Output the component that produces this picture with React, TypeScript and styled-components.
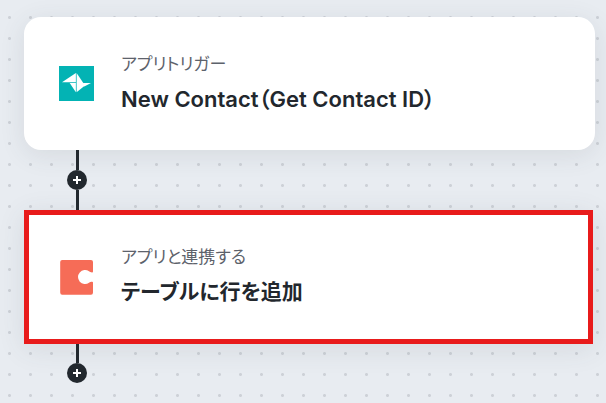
import React from "react";
import styled, { createGlobalStyle } from "styled-components";

const GlobalStyle = createGlobalStyle`
  *, *::before, *::after {
    box-sizing: border-box;
  }
  body {
    margin: 0;
    font-family: Inter, "Noto Sans CJK JP", sans-serif;
    color: #22272d;
  }
`;

const Canvas = styled.main`
  min-height: 100vh;
  padding: 17px 11px 0 24px;
  background-color: #e8ecf1;
  background-image: radial-gradient(circle, #cdd1d7 1px, transparent 2px);
  background-size: 21px 21px;
  background-position: -1px 7px;
`;

const StepCard = styled.article<{ $selected?: boolean }>`
  display: flex;
  align-items: center;
  gap: 26px;
  min-height: ${(p) => (p.$selected ? 134 : 133)}px;
  margin-right: ${(p) => (p.$selected ? 2 : 0)}px;
  padding: 0 ${(p) => (p.$selected ? 29 : 34)}px;
  background: #fff;
  border: ${(p) => (p.$selected ? "5px solid #e81b1b" : "0")};
  border-radius: ${(p) => (p.$selected ? 0 : 17)}px;
  box-shadow: 0 5px 26px rgba(60, 75, 85, 0.11);
`;

const AppIcon = styled.svg`
  display: block;
  flex: none;
  width: 37px;
  height: 37px;
`;

const StepText = styled.div`
  display: flex;
  flex-direction: column;
  gap: 6px;
  min-width: 0;
`;

const StepKind = styled.p`
  margin: 0;
  font-size: 17px;
  line-height: 24px;
  font-weight: 400;
  color: #5d626b;
  font-feature-settings: "palt";
`;

const StepTitle = styled.h2`
  margin: 0;
  font-size: 21px;
  line-height: 34px;
  font-weight: 600;
  font-feature-settings: "palt";

  &:lang(en) {
    font-size: 22px;
  }
`;

const Connector = styled.div<{ $last?: boolean }>`
  display: flex;
  flex-direction: column;
  align-items: center;
  width: 20px;
  margin-left: 43px;
  height: ${(p) => (p.$last ? 39 : 60)}px;
`;

const Line = styled.span`
  flex: 1;
  width: 3px;
  background: #22282e;
`;

const AddButton = styled.button`
  display: grid;
  place-items: center;
  flex: none;
  width: 20px;
  height: 20px;
  padding: 0;
  border: 0;
  border-radius: 50%;
  background: #22282e;
  color: #fff;
  cursor: pointer;
`;

function AddStep() {
  return (
    <AddButton type="button" aria-label="ステップを追加">
      <svg width="8" height="8" viewBox="0 0 8 8" aria-hidden="true">
        <path d="M4 0v8M0 4h8" stroke="currentColor" strokeWidth="2" />
      </svg>
    </AddButton>
  );
}

function BirdIcon() {
  return (
    <AppIcon viewBox="0 0 37 37" aria-hidden="true">
      <rect x="1" y="1" width="35" height="35" fill="#03b3b4" />
      <path d="M4 17.3 17.9 8v9.3Z" fill="#fff" />
      <path d="M11.7 18.1h6.2v9.2Z" fill="#fff" />
      <path d="M18.6 8 27 20.5 18.6 27.3Z" fill="#fff" />
      <path d="M24.8 18H33l-6.7 3.6Z" fill="#fff" />
    </AppIcon>
  );
}

function PuzzleIcon() {
  return (
    <AppIcon viewBox="0 0 37 37" aria-hidden="true">
      <path
        d="M4.2 1H33q2 0 2 2v9.5q0 1-1 .9c-1.3 0-1.9-.4-3-1.1A7 7 0 1 0 31 23.8c1.1-.8 1.9-1 3-1.1q1-.1 1 .9V33.5q0 2.2-2 2.2H4.2q-2 0-2-2.2V3q0-2 2-2Z"
        fill="#f66c57"
      />
    </AppIcon>
  );
}

export default function App() {
  return (
    <>
      <GlobalStyle />
      <Canvas lang="ja">
        <StepCard>
          <BirdIcon />
          <StepText>
            <StepKind>アプリトリガー</StepKind>
            <StepTitle lang="en">New Contact（Get Contact ID）</StepTitle>
          </StepText>
        </StepCard>
        <Connector>
          <Line />
          <AddStep />
          <Line />
        </Connector>
        <StepCard $selected>
          <PuzzleIcon />
          <StepText>
            <StepKind>アプリと連携する</StepKind>
            <StepTitle>テーブルに行を追加</StepTitle>
          </StepText>
        </StepCard>
        <Connector $last>
          <Line />
          <AddStep />
        </Connector>
      </Canvas>
    </>
  );
}
